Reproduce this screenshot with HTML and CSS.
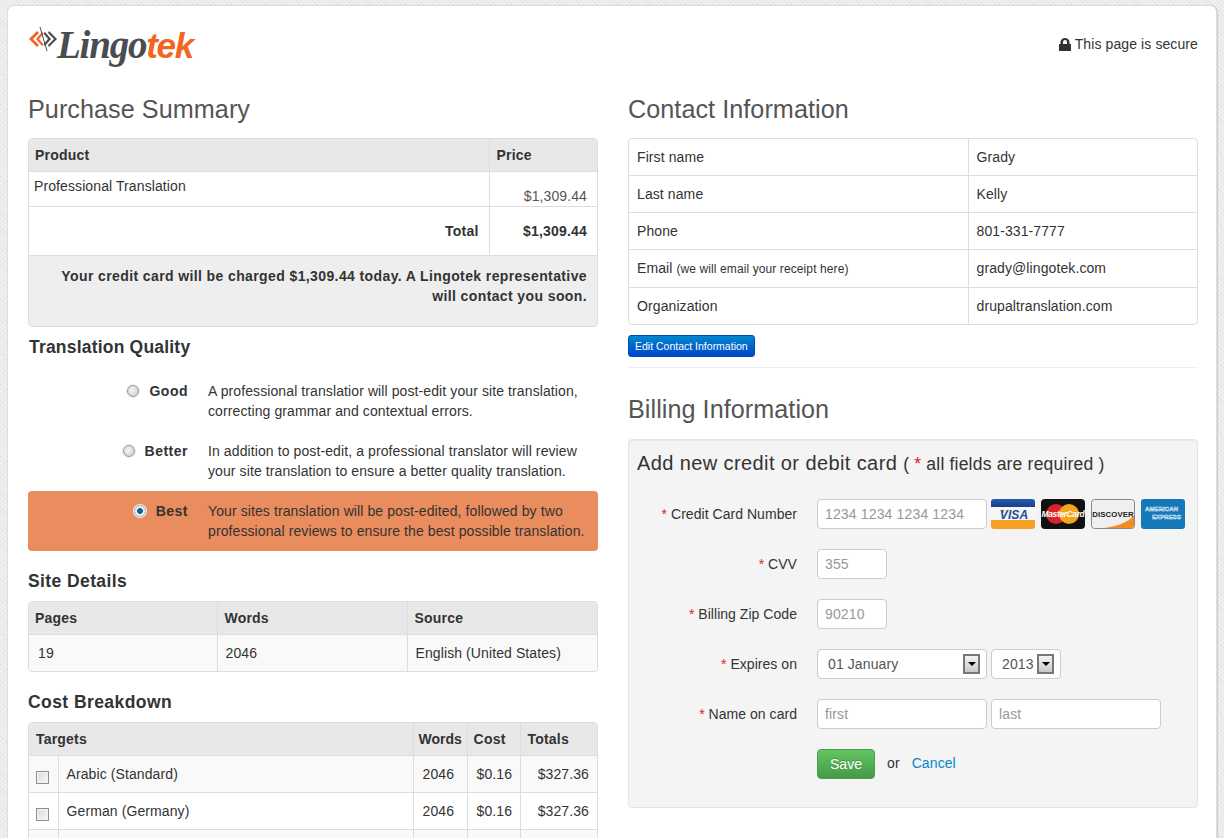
FILE: index.html
```html
<!DOCTYPE html>
<html lang="en">
<head>
<meta charset="utf-8">
<title>Lingotek - Checkout</title>
<link rel="stylesheet" href="styles.css">
</head>
<body>
<div class="card">
  <header class="top">
    <div class="logo">
      <svg class="logo-mark" width="30" height="26" viewBox="0 0 30 26">
        <path d="M9 5 L1 13 L9 21 L11 19 L5 13 L11 7Z" fill="#f26522"/>
        <path d="M14 6 L8 13 L14 20 L15.500 18.500 L11 13 L15.500 7.500Z" fill="#f26522"/>
        <path d="M17 6 L23 13 L17 20 L15.500 18.500 L20 13 L15.500 7.500Z" fill="#4a4d4f"/>
        <path d="M21 5 L29 13 L21 21 L20 19 L26 13 L20 7Z" fill="#4a4d4f"/>
        <path d="M12 1 L19 25" stroke="#4a4d4f" stroke-width="1" fill="none"/>
      </svg>
      <span class="logo-word"><span class="logo-dark">Lingo</span><span class="logo-orange">tek</span></span>
    </div>
    <div class="secure">
      <svg class="lock" width="12" height="13" viewBox="0 0 12 13"><path d="M0 6h1.500V4a4.500 4 0 0 1 9 0v2H12v7H0Z M4 6h4V4a2 2 0 0 0-4 0Z" fill="#333" fill-rule="evenodd"/></svg>
      This page is secure
    </div>
  </header>
  <div class="cols">
    <main class="col">
      <h2 class="title">Purchase Summary</h2>
      <div class="box">
        <table class="tbl summary">
          <tr class="head"><th class="c-prod">Product</th><th class="c-price">Price</th></tr>
          <tr class="r-prod"><td class="prod-name">Professional Translation</td><td class="amount low">$1,309.44</td></tr>
          <tr class="r-total"><td class="total-label">Total</td><td class="amount strong">$1,309.44</td></tr>
          <tr class="r-note"><td colspan="2" class="note">Your credit card will be charged $1,309.44 today. A Lingotek representative will contact you soon.</td></tr>
        </table>
      </div>
      <h3 class="sub first">Translation Quality</h3>
      <div class="options">
        <div class="opt"><div class="opt-label"><span class="radio"></span><b>Good</b></div><p class="opt-text">A professional translatior will post-edit your site translation, correcting grammar and contextual errors.</p></div>
        <div class="opt"><div class="opt-label"><span class="radio"></span><b>Better</b></div><p class="opt-text">In addition to post-edit, a professional translator will review your site translation to ensure a better quality translation.</p></div>
        <div class="opt selected"><div class="opt-label"><span class="radio on"></span><b>Best</b></div><p class="opt-text">Your sites translation will be post-edited, followed by two professional reviews to ensure the best possible translation.</p></div>
      </div>
      <h3 class="sub site">Site Details</h3>
      <div class="box">
        <table class="tbl site-t">
          <tr class="head"><th class="c-pages">Pages</th><th class="c-words">Words</th><th>Source</th></tr>
          <tr class="r-site"><td>19</td><td>2046</td><td>English (United States)</td></tr>
        </table>
      </div>
      <h3 class="sub cost">Cost Breakdown</h3>
      <div class="box">
        <table class="tbl cost-t">
          <colgroup><col class="k1"><col class="k2"><col class="k3"><col class="k4"><col class="k5"></colgroup>
          <tr class="head"><th colspan="2" class="targets">Targets</th><th class="h-words">Words</th><th class="h-cost">Cost</th><th class="h-totals">Totals</th></tr>
          <tr class="r-cost"><td class="c-check"><span class="check"></span></td><td>Arabic (Standard)</td><td>2046</td><td>$0.16</td><td class="right">$327.36</td></tr>
          <tr class="r-cost"><td class="c-check"><span class="check"></span></td><td>German (Germany)</td><td>2046</td><td>$0.16</td><td class="right">$327.36</td></tr>
          <tr class="r-cost"><td class="c-check"></td><td>&nbsp;</td><td></td><td></td><td></td></tr>
        </table>
      </div>
    </main>
    <aside class="col">
      <h2 class="title">Contact Information</h2>
      <div class="box">
        <table class="tbl contact">
          <tr class="r-c"><td class="c-key">First name</td><td>Grady</td></tr>
          <tr class="r-c"><td class="c-key">Last name</td><td>Kelly</td></tr>
          <tr class="r-c"><td class="c-key">Phone</td><td>801-331-7777</td></tr>
          <tr class="r-c tall"><td class="c-key">Email <small>(we will email your receipt here)</small></td><td>grady@lingotek.com</td></tr>
          <tr class="r-c"><td class="c-key">Organization</td><td>drupaltranslation.com</td></tr>
        </table>
      </div>
      <a class="btn-edit">Edit Contact Information</a>
      <hr class="rule">
      <h2 class="title billing">Billing Information</h2>
      <form class="panel">
        <h4 class="panel-title">Add new credit or debit card <span class="req-note">( <i class="star">*</i> all fields are required )</span></h4>
        <div class="row"><label class="lab"><i class="star">*</i> Credit Card Number</label>
          <div class="ctl"><input class="inp w170" placeholder="1234 1234 1234 1234">
            <div class="cards">
              <svg class="cc" width="44" height="30" viewBox="0 0 44 30"><defs><linearGradient id="vb" x1="0" y1="0" x2="0" y2="1"><stop offset="0" stop-color="#2a5cb0"/><stop offset="1" stop-color="#153f8a"/></linearGradient></defs><rect width="44" height="30" rx="3" fill="#f6f6f6"/><path d="M0 8V3a3 3 0 0 1 3-3h38a3 3 0 0 1 3 3v5Z" fill="url(#vb)"/><path d="M0 21v6a3 3 0 0 0 3 3h38a3 3 0 0 0 3-3v-6Z" fill="#f59f23"/><path d="M9 11h5l-2 3Z" fill="#f59f23"/><text x="23" y="19.500" class="t-visa">VISA</text></svg>
              <svg class="cc" width="44" height="30" viewBox="0 0 44 30"><rect width="44" height="30" rx="4" fill="#111"/><circle cx="15" cy="15" r="10" fill="#d9222a"/><circle cx="28" cy="15" r="10" fill="#f4a51c"/><text x="22" y="18" class="t-mc">MasterCard</text></svg>
              <svg class="cc" width="44" height="30" viewBox="0 0 44 30"><rect x=".5" y=".5" width="43" height="29" rx="3" fill="#efefef" stroke="#888"/><path d="M14 29 Q34 26 43 17V26a3 3 0 0 1-3 3Z" fill="#f58a1f"/><text x="22" y="18" class="t-disc">DISCOVER</text></svg>
              <svg class="cc" width="44" height="30" viewBox="0 0 44 30"><rect width="44" height="30" rx="3" fill="#1578b8"/><text x="4" y="12" class="t-amex">AMERICAN</text><text x="11" y="20" class="t-amex">EXPRESS</text></svg>
            </div>
          </div>
        </div>
        <div class="row"><label class="lab"><i class="star">*</i> CVV</label><div class="ctl"><input class="inp w70" placeholder="355"></div></div>
        <div class="row"><label class="lab"><i class="star">*</i> Billing Zip Code</label><div class="ctl"><input class="inp w70" placeholder="90210"></div></div>
        <div class="row"><label class="lab"><i class="star">*</i> Expires on</label>
          <div class="ctl">
            <div class="sel w170"><span>01 January</span><span class="arrow"></span></div>
            <div class="sel w70 yr"><span>2013</span><span class="arrow"></span></div>
          </div>
        </div>
        <div class="row"><label class="lab"><i class="star">*</i> Name on card</label><div class="ctl"><input class="inp w170" placeholder="first"><input class="inp w170" placeholder="last"></div></div>
        <div class="row actions"><div class="lab"></div><div class="ctl"><button type="button" class="btn-save">Save</button><span class="or">or</span><a class="cancel">Cancel</a></div></div>
      </form>
    </aside>
  </div>
</div>
</body>
</html>
```

FILE: styles.css
```css
* { box-sizing: border-box; }
html, body { height: 838px; overflow: hidden; }
body {
  margin: 0;
  padding: 6px 8px 0;
  font-family: "Liberation Sans", Arial, sans-serif;
  font-size: 14px;
  line-height: 20px;
  letter-spacing: .1px;
  color: #333;
  background: repeating-linear-gradient(45deg, #e4e4e4 0, #e4e4e4 1px, #f0f0f0 1px, #f0f0f0 3px);
}
.card {
  background: #fff;
  height: 900px;
  border-radius: 6px 6px 0 0;
  padding: 0 18px 0 20px;
  box-shadow: 0 0 0 1px #ddd, 1px 0 1px 1px #ccc;
}
.top { display: flex; justify-content: space-between; height: 68px; }
.logo { display: flex; align-items: flex-start; padding-top: 18px; width: 170px; }
.logo-mark { flex: none; margin-top: 2px; }
.logo-word { font-size: 39px; line-height: 42px; font-weight: bold; font-style: italic; letter-spacing: -1.2px; margin-left: -1px; white-space: nowrap; }
.logo-dark { font-family: "Liberation Serif", serif; color: #4a4d4f; }
.logo-orange { font-family: "Liberation Sans", sans-serif; font-size: 35px; letter-spacing: -1.400px; color: #f26522; }
.secure { padding-top: 28px; display: flex; align-items: flex-start; gap: 4px; line-height: 20px; }
.lock { margin-top: 4px; margin-left: -1px; }
.cols { display: grid; grid-template-columns: 570px 570px; gap: 30px; }
.title { margin: 0; font-size: 25.200px; font-weight: normal; line-height: 40px; color: #555; height: 64px; padding-top: 15px; letter-spacing: .05px; }
.box { border: 1px solid #ddd; border-radius: 4px; overflow: hidden; background: #fff; }
.tbl { width: 100%; border-collapse: collapse; table-layout: fixed; }
.tbl td, .tbl th { border: 0; padding: 0 7px; text-align: left; vertical-align: middle; }
.tbl tr + tr td { border-top: 1px solid #ddd; }
.tbl td + td, .tbl th + th { border-left: 1px solid #ddd; }
.head th { background: #e8e8e8; height: 32px; font-weight: bold; letter-spacing: .2px; padding-left: 6px; }
.c-prod { width: 460px; }
.tbl .c-price { padding-left: 7px; }
.r-prod td { height: 35px; }
.tbl .prod-name { vertical-align: top; padding: 4px 5px 0; }
.tbl .amount { text-align: right; padding-right: 10px; }
.tbl .amount.low { vertical-align: bottom; padding-top: 8px; color: #555; }
.strong, .total-label { font-weight: bold; letter-spacing: .2px; }
.tbl .total-label { text-align: right; padding-right: 10px; }
.r-total td { height: 49px; }
.tbl .note { height: 71px; background: #eee; font-weight: bold; letter-spacing: .39px; text-align: right; vertical-align: top; padding: 10px 10px 0 20px; line-height: 20px; }
.sub { margin: 0; font-size: 17.500px; line-height: 20px; font-weight: bold; color: #333; }
.sub.first { padding: 10px 0 14px 1px; height: 44px; letter-spacing: .2px; }
.opt { display: flex; height: 60px; padding-top: 10px; border-radius: 4px; }
.selected { background: #e98c5e; }
.opt-label { width: 160px; flex: none; display: flex; justify-content: flex-end; align-items: flex-start; gap: 10px; }
.opt-label b { font-weight: bold; letter-spacing: .5px; }
.opt-text { margin: 0 0 0 20px; width: 385px; color: #333; }
.radio { width: 12px; height: 12px; border-radius: 50%; border: 1px solid #9a9a9a; background: radial-gradient(circle at 40% 40%, #f4f4f4, #c9c9c9); margin-top: 4px; box-shadow: 0 0 0 1px #eee; }
.radio.on { background: radial-gradient(circle, #0b7ab8 0, #0b4f80 35%, #f2f2f2 45%, #dcdcdc 100%); border-color: #b8c4cc; }
.sub.site { padding: 20px 0 10px; height: 50px; letter-spacing: .4px; }
.c-pages { width: 188px; }
.c-words { width: 190px; }
.site-t th + th { padding-left: 7px; }
.r-site td { height: 37px; background: #f9f9f9; }
.tbl.site-t .r-site td { padding-left: 8px; }
.tbl.site-t .r-site td:first-child { padding-left: 9px; }
.sub.cost { padding: 20px 0 10px; height: 50px; letter-spacing: .43px; }
.k1 { width: 29px; }
.k2 { width: 355px; }
.k3 { width: 54px; }
.k4 { width: 53px; }
.k5 { width: 78px; }
.tbl .targets { padding-left: 7px; }
.tbl .h-words { padding-left: 5px; letter-spacing: 0; }
.tbl .h-cost { padding-left: 6px; letter-spacing: .3px; }
.tbl .h-totals { padding-left: 7px; }
.r-cost td { height: 37px; }
.r-cost:nth-child(even) td { background: #f9f9f9; }
.tbl .c-check { padding: 8px 0 0 7px; }
.check { display: block; width: 13px; height: 13px; border: 1px solid #8f8f8f; background: linear-gradient(135deg, #dcdcdc, #f6f6f6); box-shadow: inset 0 0 0 1px #f4f4f4; }
.tbl .right { text-align: right; padding-right: 9px; }
.cost-t .c-check + td { padding-left: 8px; }
.cost-t td + td + td { padding-left: 9px; }
.tbl .r-c td { height: 37px; padding: 0 8px; }
.tbl .r-c:first-child td { height: 36px; }
.tbl .r-c.tall td { height: 38px; }
.c-key { width: 339px; }
small { font-size: 12px; }
.btn-edit {
  display: block; width: 127px; height: 22px; margin-top: 10px; padding-left: 6px;
  font-size: 10.500px; letter-spacing: 0; line-height: 21px; color: #fff; white-space: nowrap;
  background: linear-gradient(#0088cc, #0044cc); border: 1px solid #0049b8; border-radius: 3px;
}
.rule { border: 0; border-top: 1px solid #eee; margin: 10px 0 0; }
.title.billing { height: 71px; padding-top: 21px; }
.panel { background: #f4f4f4; border: 1px solid #e3e3e3; border-radius: 4px; height: 369px; padding: 8px; box-shadow: inset 0 1px 1px rgba(0,0,0,.05); }
.panel-title { margin: 0 0 15px; font-weight: normal; font-size: 20px; letter-spacing: .4px; line-height: 30px; height: 36px; color: #333; }
.req-note { font-size: 17.500px; letter-spacing: .2px; }
.star { color: #d9232e; font-style: normal; }
.row { display: flex; height: 50px; align-items: flex-start; }
.lab { width: 160px; flex: none; text-align: right; line-height: 30px; letter-spacing: .04px; }
.ctl { margin-left: 20px; display: flex; gap: 4px; align-items: flex-start; }
.inp { height: 30px; border: 1px solid #ccc; border-radius: 4px; padding: 0 7px; font: 14px "Liberation Sans", Arial, sans-serif; letter-spacing: .15px; color: #555; background: #fff; outline: 0; }
.inp::placeholder { color: #999; opacity: 1; }
.w170 { width: 170px; }
.w70 { width: 70px; }
.cards { display: flex; gap: 6px; }
.cc { display: block; }
.t-visa { font: italic bold 12px "Liberation Sans", sans-serif; fill: #1c4b9c; text-anchor: middle; }
.t-mc { font: italic bold 8.500px "Liberation Sans", sans-serif; fill: #fff; text-anchor: middle; letter-spacing: -.4px; }
.t-disc { font: bold 7.800px "Liberation Sans", sans-serif; fill: #222; text-anchor: middle; }
.t-amex { font: bold 6px "Liberation Sans", sans-serif; fill: #1578b8; stroke: #e8f4fc; stroke-width: .45px; }
.sel { height: 30px; border: 1px solid #ccc; border-radius: 4px; background: #fff; display: flex; align-items: center; justify-content: space-between; padding: 0 6px 0 10px; color: #555; }
.arrow { flex: none; width: 17px; height: 20px; border: 2px solid #777; background: linear-gradient(#f4f4f4, #c8c8c8); position: relative; }
.arrow::after { content: ""; position: absolute; left: 2.500px; top: 6px; border: 4px solid transparent; border-top: 4px solid #000; border-bottom: 0; }
.btn-save {
  width: 58px; height: 30px; padding: 0; font: 14px "Liberation Sans", Arial, sans-serif; color: #fff;
  background: linear-gradient(#62c462, #459a45); border: 1px solid #4a9f4a; border-radius: 4px;
  text-shadow: 0 -1px 0 rgba(0,0,0,.2);
}
.or { margin-left: 8px; line-height: 28px; }
.cancel { margin-left: 8px; line-height: 28px; color: #0088cc; }
```
